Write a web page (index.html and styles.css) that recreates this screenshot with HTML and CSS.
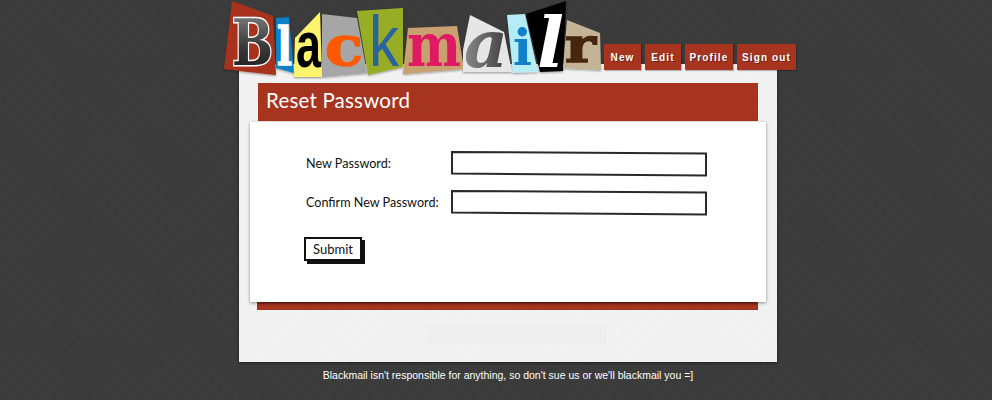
FILE: index.html
```html
<!DOCTYPE html>
<html lang="en">
<head>
<meta charset="utf-8">
<title>Blackmail - Reset Password</title>
<link rel="stylesheet" href="styles.css">
</head>
<body>
<div class="page">
  <header class="header">
    <a class="logo" href="#" aria-label="Blackmail">
      <svg class="logo-svg" viewBox="220 0 385 80" width="385" height="80">
        <defs>
          <linearGradient id="gb" x1="0" y1="0" x2="0" y2="1"><stop offset="0" stop-color="#8d8d8d"/><stop offset=".55" stop-color="#3a3a3a"/><stop offset="1" stop-color="#171717"/></linearGradient>
          <linearGradient id="ga" x1="0" y1="0" x2="1" y2="0"><stop offset="0" stop-color="#8a8a8a"/><stop offset="1" stop-color="#3d3d3d"/></linearGradient>
          <filter id="ps" x="-10%" y="-10%" width="120%" height="120%"><feDropShadow dx="0" dy="1" stdDeviation="1" flood-color="#000" flood-opacity=".4"/></filter>
        </defs>
        <g filter="url(#ps)">
          <polygon fill="#a8321c" points="232,1 273,16 276,75 248,72 224,69"/>
          <polygon fill="#0a80c8" points="276,18 289,17 294,73 276,68"/>
          <polygon fill="#fdf36c" points="320,12 322,77 294,77 295,38"/>
          <polygon fill="#a6a6a6" points="322,14 357,18 367,73 322,77"/>
          <polygon fill="#97ad25" points="357,11 403,8 403,67 368,75"/>
          <polygon fill="#c9a070" points="408,28 457,26 464,69 403,74"/>
          <polygon fill="#e6e6e6" points="470,15 504,32 512,72 463,72 463,50"/>
          <polygon fill="#b5ecf6" points="507,15 525,14 538,72 513,73"/>
          <polygon fill="#000" points="526,14 566,1 563,71 540,72"/>
          <polygon fill="#c5b397" points="567,20 600,33 601,70 563,68"/>
        </g>
        <text class="l-serif-b l-bigb" x="232" y="65" font-size="64" textLength="41" lengthAdjust="spacingAndGlyphs">B</text>
        <text class="l-serif-b l-fat" x="277" y="65" font-size="53" fill="#fff" stroke="#fff" textLength="15" lengthAdjust="spacingAndGlyphs">l</text>
        <text class="l-sans-b" x="296" y="67" font-size="64" fill="#000" textLength="25" lengthAdjust="spacingAndGlyphs">a</text>
        <text class="l-serif-b l-fat" x="325" y="65" font-size="54" fill="#fb5a03" stroke="#fb5a03" textLength="38" lengthAdjust="spacingAndGlyphs">c</text>
        <text class="l-sans" x="369" y="66" font-size="72" fill="#2b62a0" textLength="30" lengthAdjust="spacingAndGlyphs">k</text>
        <text class="l-serif-b" x="407" y="66" font-size="59" fill="#df1a62" textLength="54" lengthAdjust="spacingAndGlyphs">m</text>
        <text class="l-serif-bi" x="464" y="67" font-size="66" fill="url(#ga)" textLength="44" lengthAdjust="spacingAndGlyphs">a</text>
        <text class="l-serif-b" x="513" y="65" font-size="50" fill="#1180c8" textLength="19" lengthAdjust="spacingAndGlyphs">i</text>
        <text class="l-serif-bi" x="537" y="67" font-size="70" fill="#fff" textLength="27" lengthAdjust="spacingAndGlyphs">l</text>
        <text class="l-serif-b l-fat" x="565" y="62" font-size="48" fill="#46260f" stroke="#46260f" textLength="31" lengthAdjust="spacingAndGlyphs">r</text>
      </svg>
    </a>
    <nav class="nav">
      <a class="nav-item nav-new" href="#">New</a>
      <a class="nav-item nav-edit" href="#">Edit</a>
      <a class="nav-item nav-profile" href="#">Profile</a>
      <a class="nav-item nav-signout" href="#">Sign out</a>
    </nav>
  </header>

  <main class="panel">
    <h1 class="title">Reset Password</h1>
    <section class="card">
      <form class="form">
        <div class="row">
          <label class="label" for="pw">New Password:</label>
          <span class="field">
            <svg class="field-frame" viewBox="0 0 256 26" width="256" height="26"><polygon points="1,1 255,2.5 255,24.5 1,22.5" fill="#fff" stroke="#2a2a2a" stroke-width="2"/></svg>
            <input class="input" id="pw" type="password">
          </span>
        </div>
        <div class="row">
          <label class="label" for="pw2">Confirm New Password:</label>
          <span class="field">
            <svg class="field-frame" viewBox="0 0 256 26" width="256" height="26"><polygon points="1,1 255,2.5 255,24.5 1,22.5" fill="#fff" stroke="#2a2a2a" stroke-width="2"/></svg>
            <input class="input" id="pw2" type="password">
          </span>
        </div>
        <button class="submit" type="button">Submit</button>
      </form>
    </section>
    <div class="card-base"></div>
    <div class="notice"></div>
  </main>
  <footer class="footer">Blackmail isn't responsible for anything, so don't sue us or we'll blackmail you =]</footer>
</div>
</body>
</html>
```
FILE: styles.css
```css
* { box-sizing: border-box; }
html, body { margin: 0; padding: 0; }
body {
  height: 400px;
  overflow: hidden;
  background-color: #3b3b3b;
  background-image:
    repeating-linear-gradient(45deg, rgba(255,255,255,.02) 0 1px, transparent 1px 3px),
    repeating-linear-gradient(-45deg, rgba(0,0,0,.05) 0 1px, transparent 1px 3px);
  font-family: "Lato", "Liberation Sans", sans-serif;
}
.page { width: 538px; margin-left: 239px; }

.header {
  position: relative;
  z-index: 2;
  display: flex;
  align-items: flex-end;
  height: 70px;
  margin-left: -19px;
  margin-bottom: -6px;
  width: 580px;
}
.logo { display: block; width: 385px; height: 70px; flex: none; margin-right: -1px; }
.logo-svg { display: block; overflow: visible; margin-bottom: -10px; }
.l-serif-b { font-family: "DejaVu Serif", serif; font-weight: 700; }
.l-serif-bi { font-family: "DejaVu Serif", serif; font-weight: 700; font-style: italic; }
.l-sans { font-family: "Liberation Sans", sans-serif; }
.l-sans-b { font-family: "Liberation Sans", sans-serif; font-weight: 700; }
.l-bigb { fill: url(#gb); stroke: #fff; stroke-width: 3; paint-order: stroke; }
.l-fat { stroke-width: 1.4; }

.nav { display: flex; gap: 4px; }
.nav-item {
  display: flex;
  align-items: center;
  justify-content: center;
  height: 26px;
  background: #a6341f;
  color: #fff;
  font-family: "Liberation Sans", sans-serif;
  font-size: 10px;
  font-weight: 700;
  letter-spacing: 1.1px;
  text-decoration: none;
  text-shadow: 1px 1px 0 rgba(0,0,0,.35);
  box-shadow: 1px 1px 1px rgba(0,0,0,.25);
}
.nav-new { width: 37px; }
.nav-edit { width: 36px; }
.nav-profile { width: 48px; }
.nav-signout { width: 59px; }

.panel {
  height: 298px;
  padding: 19px 19px 0;
  background-color: #f1f1f1;
  background-image:
    repeating-linear-gradient(45deg, rgba(0,0,0,.006) 0 1px, transparent 1px 3px),
    repeating-linear-gradient(-45deg, rgba(255,255,255,.2) 0 1px, transparent 1px 3px);
  box-shadow: 0 1px 3px rgba(0,0,0,.5);
}
.title {
  height: 38px;
  margin: 0 0 1px;
  padding: 0 8px;
  background: #a6341f;
  color: #fff;
  font-size: 20.5px;
  font-weight: 400;
  line-height: 35px;
  letter-spacing: .2px;
}
.card {
  height: 180px;
  margin: 0 -8px;
  padding: 29px 0 0 56px;
  background: #fff;
  box-shadow: 0 1px 3px rgba(0,0,0,.45);
  position: relative;
  z-index: 1;
}
.form { display: flex; flex-direction: column; align-items: flex-start; }
.row { display: flex; align-items: center; height: 26px; margin-bottom: 13px; }
.label { width: 145px; margin-top: -1px; font-size: 12.6px; color: #111; }
.field { position: relative; display: block; width: 256px; height: 26px; }
.field-frame { display: block; }
.input {
  position: absolute;
  inset: 3px;
  width: 250px;
  border: 0;
  background: transparent;
  outline: 0;
}
.submit {
  width: 58px;
  height: 24px;
  margin: 8px 0 0 -2px;
  padding: 0;
  background: #fff;
  border: 2px solid #111;
  box-shadow: 3px 3px 0 #111;
  color: #111;
  font-family: inherit;
  font-size: 13px;
}
.card-base {
  height: 8px;
  margin-left: -1px;
  background: #a6341f;
  box-shadow: inset 0 2px 2px rgba(0,0,0,.25);
}
.notice { width: 179px; height: 19px; margin: 15px 0 0 169px; background: #eeeeee; }
.footer {
  margin-top: 7px;
  color: #fff;
  font-family: "Liberation Sans", sans-serif;
  font-size: 10.5px;
  line-height: 13px;
  text-align: center;
  white-space: nowrap;
}
```
